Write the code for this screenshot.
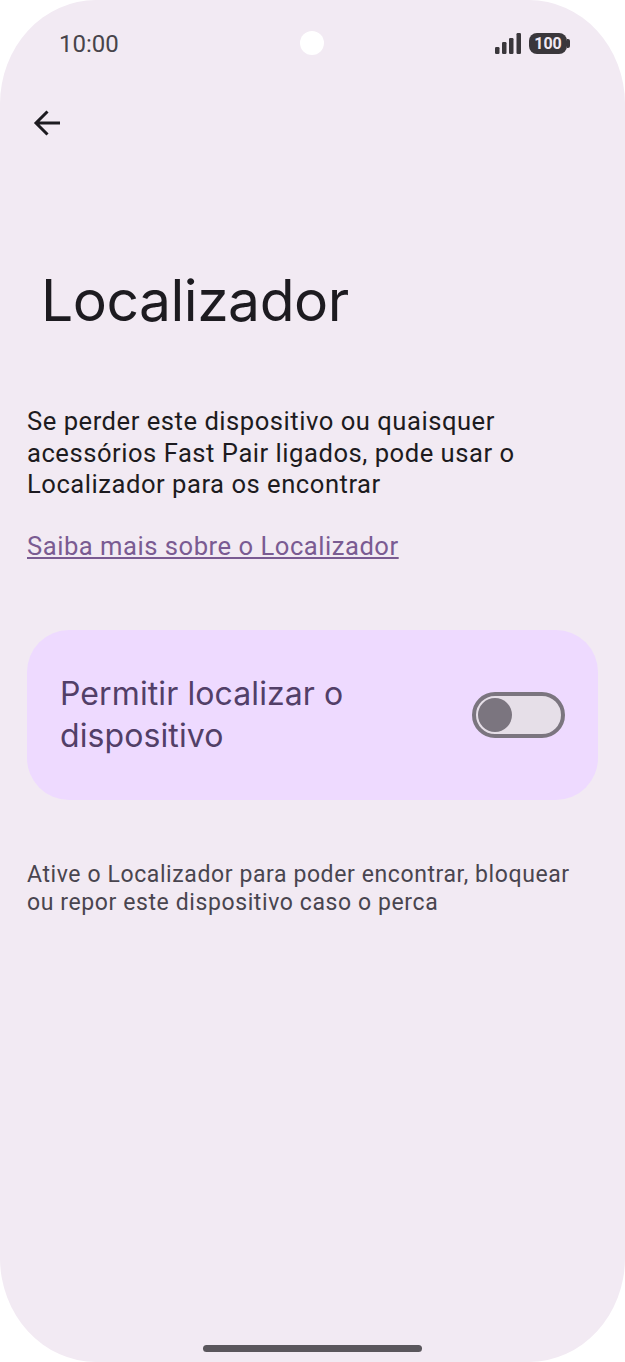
<div class="phone">
  <header class="status">
    <span class="time">10:00</span>
    <span class="camera"></span>
    <div class="indicators">
      <svg class="signal" width="26" height="21" viewBox="0 0 26 21" aria-hidden="true">
        <rect x="0" y="14" width="4.500" height="7" rx="1.200" />
        <rect x="7" y="9" width="4.500" height="12" rx="1.200" />
        <rect x="14" y="5" width="4.500" height="16" rx="1.200" />
        <rect x="21.500" y="0" width="4.500" height="21" rx="1.200" />
      </svg>
      <div class="battery"><span>100</span><i></i></div>
    </div>
  </header>

  <button class="back" aria-label="Voltar">
    <svg width="32" height="32" viewBox="0 0 32 32" aria-hidden="true">
      <path d="M29 16H6M16.500 4.500 5 16l11.500 11.500" fill="none" stroke="#1d1b20" stroke-width="3" />
    </svg>
  </button>

  <h1>Localizador</h1>

  <p class="intro">Se perder este dispositivo ou quaisquer acessórios Fast Pair ligados, pode usar o Localizador para os encontrar</p>
  <a class="link" href="#saiba">Saiba mais sobre o Localizador</a>

  <section class="card">
    <span class="label">Permitir localizar o dispositivo</span>
    <div class="switch"><span class="thumb"></span></div>
  </section>

  <p class="note">Ative o Localizador para poder encontrar, bloquear ou repor este dispositivo caso o perca</p>

  <div class="home"></div>
</div>

<style>
  :global(body) {
    margin: 0;
    background: #fff;
  }
  .phone {
    position: relative;
    box-sizing: border-box;
    width: 625px;
    height: 1362px;
    padding: 0 27px;
    background: #f2eaf3;
    border-radius: 96px / 104px;
    font-family: Roboto, sans-serif;
    overflow: hidden;
  }
  .status {
    display: flex;
    align-items: center;
    justify-content: space-between;
    height: 30px;
    padding: 28px 29px 0 32px;
    position: relative;
  }
  .time {
    font-size: 24px;
    color: #47444a;
    line-height: 30px;
    margin-top: 2px;
  }
  .camera {
    position: absolute;
    left: 273px;
    top: 31px;
    width: 24px;
    height: 24px;
    border-radius: 50%;
    background: #fff;
  }
  .indicators {
    display: flex;
    align-items: center;
    gap: 8px;
    margin-right: 2px;
  }
  .signal {
    fill: #3a373b;
    display: block;
  }
  .battery {
    position: relative;
    width: 38px;
    height: 21px;
    background: #3a373b;
    border-radius: 8px;
    display: flex;
    align-items: center;
    justify-content: center;
    font-size: 16px;
    font-weight: 700;
    color: #f2eaf3;
  }
  .battery i {
    position: absolute;
    right: -2.500px;
    top: 6px;
    width: 3px;
    height: 9px;
    border-radius: 0 2px 2px 0;
    background: #3a373b;
  }
  .back {
    display: block;
    margin: 49px 0 0 4px;
    padding: 0;
    width: 32px;
    height: 32px;
    background: none;
    border: 0;
  }
  .back svg {
    display: block;
  }
  h1 {
    margin: 127px 0 0 14px;
    font-family: Inter, sans-serif;
    font-weight: 400;
    font-size: 57px;
    line-height: 70px;
    color: #1d1b20;
    letter-spacing: -0.500px;
  }
  .intro {
    margin: 70px 0 0;
    width: 520px;
    font-size: 25.600px;
    line-height: 31.500px;
    letter-spacing: 0.52px;
    color: #1d1b20;
  }
  .link {
    display: block;
    margin-top: 30px;
    font-size: 25.600px;
    line-height: 31.500px;
    letter-spacing: 0.52px;
    color: #7a5b92;
    text-decoration: underline;
  }
  .card {
    display: flex;
    align-items: center;
    justify-content: space-between;
    box-sizing: border-box;
    width: 571px;
    height: 170px;
    margin-top: 68px;
    padding: 0 33px;
    background: #eedaff;
    border-radius: 42px;
  }
  .label {
    width: 330px;
    font-family: Inter, sans-serif;
    font-size: 32px;
    line-height: 42px;
    letter-spacing: 0.100px;
    color: #523f68;
  }
  .switch {
    position: relative;
    box-sizing: border-box;
    width: 93px;
    height: 46px;
    background: #e6dfe8;
    border: 4px solid #7b757f;
    border-radius: 23px;
  }
  .thumb {
    position: absolute;
    left: 2px;
    top: 2px;
    width: 34px;
    height: 34px;
    border-radius: 50%;
    background: #7b757f;
  }
  .note {
    margin: 61px 0 0;
    width: 552px;
    font-size: 23px;
    line-height: 28px;
    letter-spacing: 0.6px;
    color: #49454f;
  }
  .home {
    position: absolute;
    left: 203px;
    bottom: 10px;
    width: 219px;
    height: 7px;
    border-radius: 4px;
    background: #5a565c;
  }
</style>
